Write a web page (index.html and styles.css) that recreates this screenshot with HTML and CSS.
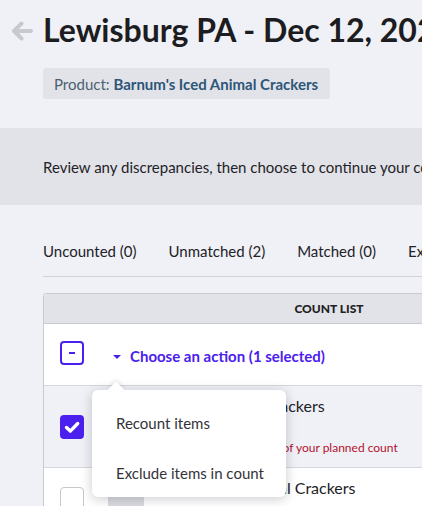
FILE: index.html
```html
<!DOCTYPE html>
<html lang="en">
<head>
<meta charset="utf-8">
<title>Lewisburg PA - Count</title>
<link rel="stylesheet" href="styles.css">
</head>
<body>
<div class="page">
  <header class="head">
    <div class="title-row">
      <svg class="back" width="22" height="20" viewBox="0 0 22 20" aria-hidden="true">
        <path d="M20 10H3.5M10.5 2.5L3 10l7.5 7.5" fill="none" stroke="#c8c9cf" stroke-width="4" stroke-linecap="round" stroke-linejoin="round"/>
      </svg>
      <h1 class="title">Lewisburg PA - Dec 12, 2023</h1>
    </div>
    <div class="pill">Product: <strong class="pill-name">Barnum's Iced Animal Crackers</strong></div>
  </header>

  <div class="banner">Review any discrepancies, then choose to continue your count or finish it.</div>

  <nav class="tabs">
    <span class="tab">Uncounted (0)</span>
    <span class="tab">Unmatched (2)</span>
    <span class="tab">Matched (0)</span>
    <span class="tab">Excluded (0)</span>
  </nav>

  <div class="table">
    <div class="thead">
      <span class="th"></span>
      <span class="th th-center">COUNT LIST</span>
    </div>

    <div class="row action-row">
      <span class="cb cb-ind"><span class="dash"></span></span>
      <div class="action">
        <span class="caret"></span>
        <span class="action-text">Choose an action (1 selected)</span>
        <div class="menu">
          <div class="menu-item">Recount items</div>
          <div class="menu-item">Exclude items in count</div>
        </div>
      </div>
    </div>

    <div class="row item selected">
      <span class="cb cb-on">
        <svg width="24" height="24" viewBox="0 0 24 24" aria-hidden="true"><path d="M6.5 12.5l3.8 3.6 7.4-7.6" fill="none" stroke="#fff" stroke-width="3.4" stroke-linecap="round" stroke-linejoin="round"/></svg>
      </span>
      <span class="thumb"><span class="thumb-mark"></span></span>
      <div class="info">
        <div class="name">Glazed Animal Crackers</div>
        <div class="warn">Count is less than 75% of your planned count</div>
      </div>
    </div>

    <div class="row item">
      <span class="cb"></span>
      <span class="thumb"><span class="thumb-mark"></span></span>
      <div class="info">
        <div class="name">Barnum's Seasonal Crackers</div>
      </div>
    </div>
  </div>
</div>
</body>
</html>
```

FILE: styles.css
```css
html, body {
  margin: 0;
  padding: 0;
  background: #f0f1f6;
  overflow: hidden;
}

.page {
  font-family: Lato, "Open Sans", sans-serif;
  color: #1e1e23;
  padding-top: 11px;
  width: 1000px;
}

.title-row {
  display: flex;
  align-items: center;
  gap: 10px;
  padding-left: 11px;
}

.back {
  display: block;
  margin-top: 2px;
}

.title {
  margin: 0;
  font-size: 32px;
  line-height: 38px;
  font-weight: 700;
  white-space: nowrap;
  color: #1c1c21;
}

.pill {
  display: inline-flex;
  align-items: center;
  height: 31px;
  margin: 19px 0 0 43px;
  padding: 0 12px 0 11px;
  background: #e2e3e8;
  border-radius: 3px;
  font-size: 15px;
  color: #4c5f72;
  white-space: pre;
}

.pill-name {
  font-weight: 700;
  color: #2d5578;
}

.banner {
  display: flex;
  align-items: center;
  height: 77px;
  margin-top: 29px;
  padding-left: 43px;
  background: #e2e3e8;
  font-size: 15px;
  color: #222227;
  white-space: nowrap;
}

.tabs {
  display: flex;
  gap: 32px;
  margin: 36px 0 0 43px;
  padding-bottom: 15px;
  border-bottom: 1px solid #d2d3d8;
  font-size: 15px;
  line-height: 20px;
  color: #222227;
  white-space: nowrap;
}

.table {
  margin: 16px 0 0 43px;
  border: 1px solid #c9cad0;
  border-right: none;
  border-radius: 4px 0 0 0;
  background: #fff;
}

.thead {
  display: grid;
  grid-template-columns: 64px 442px 1fr;
  height: 29px;
  align-items: center;
  background: #e2e3e8;
  border-bottom: 1px solid #c9cad0;
  border-radius: 4px 0 0 0;
}

.th-center {
  text-align: center;
  font-size: 12px;
  font-weight: 900;
  color: #1e1e23;
}

.row {
  display: flex;
  padding: 0 16px;
  border-bottom: 1px solid #d6d7dc;
}

.action-row {
  box-sizing: border-box;
  height: 62px;
  padding-top: 17px;
  align-items: flex-start;
}

.cb {
  flex: none;
  width: 24px;
  height: 24px;
  box-sizing: border-box;
  border: 1.5px solid #c7c8cd;
  border-radius: 4px;
  background: #fff;
  display: flex;
  align-items: center;
  justify-content: center;
}

.cb-ind {
  border: 2px solid #4b20ee;
}

.dash {
  width: 6px;
  height: 2px;
  background: #4b20ee;
}

.cb-on {
  border: none;
  background: #4b20ee;
}

.cb-on svg {
  display: block;
}

.action {
  position: relative;
  display: flex;
  align-items: center;
  gap: 9px;
  margin: 5px 0 0 29px;
  line-height: 20px;
}

.caret {
  width: 0;
  height: 0;
  border-left: 4px solid transparent;
  border-right: 4px solid transparent;
  border-top: 4px solid #4b20ee;
  margin-top: 2px;
}

.action-text {
  font-size: 15px;
  font-weight: 700;
  color: #4b20ee;
  white-space: nowrap;
}

.menu {
  position: absolute;
  left: -21px;
  top: 44px;
  z-index: 5;
  width: 194px;
  padding-top: 8px;
  background: #fff;
  border-radius: 6px;
  box-shadow: 0 2px 12px rgba(20, 20, 40, 0.22);
}

.menu::before {
  content: "";
  position: absolute;
  left: 18px;
  top: -6px;
  width: 12px;
  height: 12px;
  background: #fff;
  transform: rotate(45deg);
  box-shadow: -2px -2px 4px rgba(20, 20, 40, 0.08);
}

.menu-item {
  position: relative;
  height: 50px;
  box-sizing: border-box;
  padding: 15px 24px;
  font-size: 15px;
  line-height: 20px;
  color: #333338;
  white-space: nowrap;
}

.menu-item:last-child {
  height: 49px;
}

.item {
  align-items: center;
  padding-top: 10px;
  padding-bottom: 10px;
}

.selected {
  background: #f0f1f6;
  height: 82px;
  box-sizing: border-box;
}

.thumb {
  flex: none;
  width: 36px;
  height: 36px;
  margin-left: 24px;
  background: #dadbe0;
  display: flex;
  align-items: center;
  justify-content: center;
  align-self: flex-start;
  margin-top: 6px;
}

.thumb-mark {
  width: 5px;
  height: 8px;
  background: #9fa8ae;
  margin-top: 16px;
}

.info {
  margin-left: 16px;
  align-self: flex-start;
}

.name {
  font-size: 16px;
  line-height: 20px;
  color: #222227;
  white-space: nowrap;
}

.warn {
  margin-top: 24px;
  font-size: 12px;
  line-height: 16px;
  color: #b3122e;
  white-space: nowrap;
}
```
